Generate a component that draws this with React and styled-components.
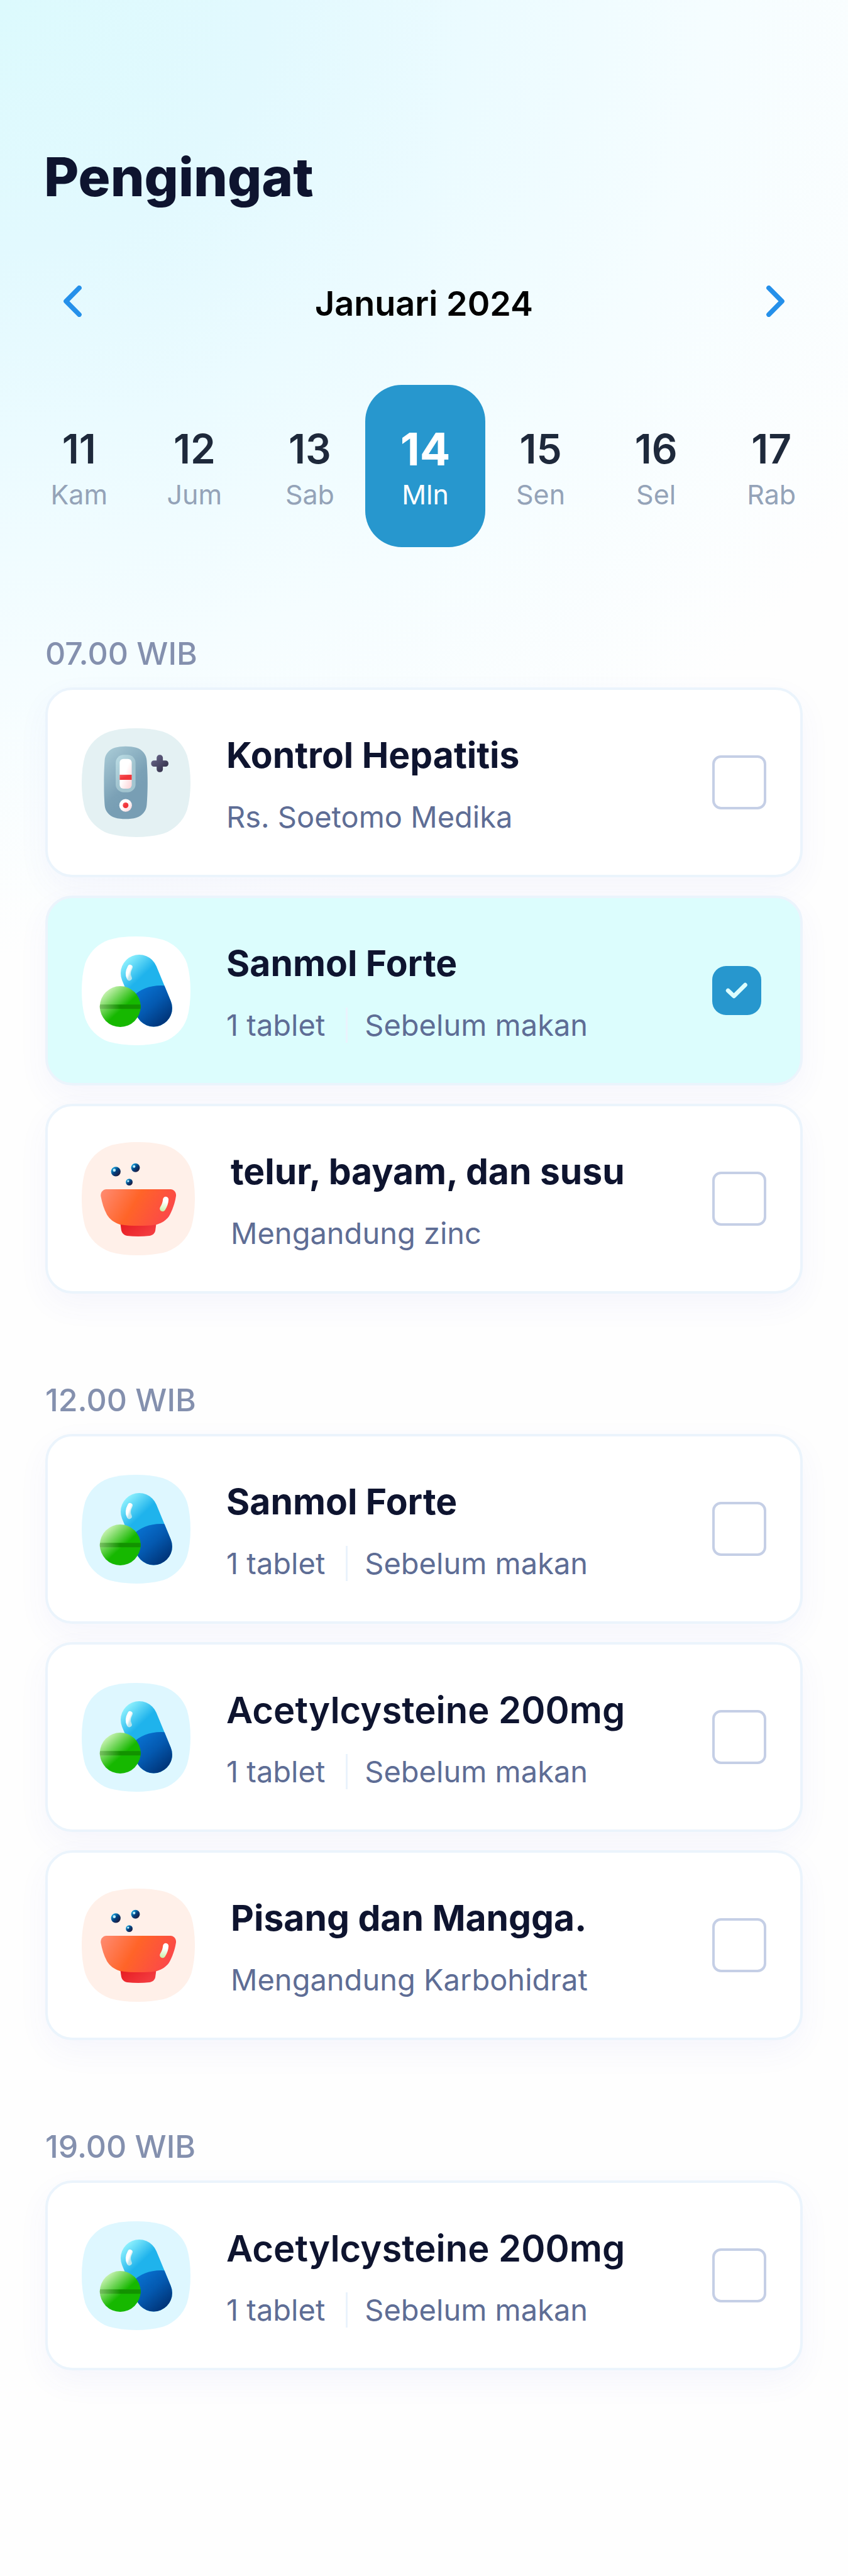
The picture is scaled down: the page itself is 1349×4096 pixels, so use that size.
import React, { useState } from "react";
import styled, { createGlobalStyle } from "styled-components";

const GlobalStyle = createGlobalStyle`
  *, *::before, *::after { box-sizing: border-box; }
  html { background: #fefefe; }
  body { margin: 0; font-family: "Inter", "Liberation Sans", sans-serif; }
  h1, h2, h3, p, ul { margin: 0; padding: 0; }
  ul { list-style: none; }
  button { border: 0; padding: 0; background: none; font: inherit; color: inherit; cursor: pointer; }
`;

const Page = styled.div`
  padding: 230px 0 327px;
  background: radial-gradient(
      ellipse 120% 1520px at 0 0,
      #dcfafd 0%,
      #e2f9fe 26%,
      #ebfbff 46%,
      #f5fdff 70%,
      #fefefe 100%
    ) no-repeat #fefefe;
`;

const PageTitle = styled.h1`
  padding: 0 70px;
  color: #0e142f;
  font-size: 85px;
  line-height: 104px;
  font-weight: 800;
`;

const MonthNav = styled.nav`
  display: flex;
  align-items: flex-start;
  justify-content: space-between;
  margin-top: 117px;
  padding: 0 101px;
`;

const MonthName = styled.h2`
  color: #000;
  font-size: 54px;
  line-height: 64px;
  font-weight: 600;
`;

const ArrowButton = styled.button`
  display: flex;
  align-items: center;
  height: 56px;
`;

const ArrowIcon = styled.svg`
  width: 29px;
  height: 50px;
  fill: none;
  stroke: #2590ea;
  stroke-width: 8.6;
  stroke-linecap: round;
  stroke-linejoin: round;
`;

const Days = styled.ul`
  display: grid;
  grid-template-columns: repeat(7, minmax(0, 1fr));
  justify-items: center;
  margin-top: 97px;
  padding: 0 30px 0 34px;
`;

const Day = styled.li`
  display: flex;
  justify-content: center;
`;

const DayButton = styled.button`
  display: flex;
  flex-direction: column;
  align-items: center;
  gap: 8px;
  flex: none;
  width: 191px;
  height: 258px;
  padding-top: 64px;
  border-radius: 58px;
  background: ${(p) => (p.$active ? "#2797ce" : "transparent")};
`;

const DayNumber = styled.span`
  color: ${(p) => (p.$active ? "#fff" : "#1e293b")};
  font-size: ${(p) => (p.$active ? 72 : 64)}px;
  line-height: 76px;
  font-weight: ${(p) => (p.$active ? 700 : 600)};
`;

const DayName = styled.span`
  color: ${(p) => (p.$active ? "#fff" : "#94a3b8")};
  font-size: 43px;
  line-height: 52px;
  font-weight: 400;
`;

const Schedule = styled.main`
  display: flex;
  flex-direction: column;
  gap: 139px;
  margin-top: 139px;
  padding: 0 72px;
`;

const TimeSlot = styled.section`
  display: flex;
  flex-direction: column;
  gap: 24px;
`;

const TimeLabel = styled.h2`
  color: #8490ae;
  font-size: 50px;
  line-height: 60px;
  font-weight: 500;
`;

const CardList = styled.ul`
  display: flex;
  flex-direction: column;
  gap: 29px;
`;

const Card = styled.li`
  display: flex;
  align-items: center;
  gap: 57px;
  height: 302px;
  padding: 0 54px;
  border: 4px solid #ebf4fc;
  border-radius: 43px;
  background: ${(p) => (p.$done ? "#dcfdfd" : "#fff")};
  box-shadow: 0 18px 50px rgba(80, 85, 210, 0.05);
`;

const Tile = styled.svg`
  flex: none;
  width: ${(p) => p.$size}px;
  height: ${(p) => p.$size}px;
`;

const CardBody = styled.div`
  display: flex;
  flex-direction: column;
  flex: 1;
  gap: 30px;
  min-width: 0;
`;

const CardTitle = styled.h3`
  color: #0e142f;
  font-size: ${(p) => (p.$light ? 58 : 57)}px;
  line-height: 80px;
  font-weight: ${(p) => (p.$light ? 600 : 700)};
  white-space: nowrap;
`;

const Details = styled.div`
  display: flex;
  align-items: center;
  color: #5e6d95;
  font-size: 47px;
  line-height: 56px;
  white-space: nowrap;
`;

const Divider = styled.span`
  width: 3px;
  height: 56px;
  margin: 0 27px 0 33px;
  background: #eaf3fc;
`;

const CheckSlot = styled.span`
  display: grid;
  justify-items: start;
  align-items: center;
  flex: none;
  width: 86px;
`;

const CheckInput = styled.input`
  grid-area: 1 / 1;
  appearance: none;
  width: 86px;
  height: 86px;
  margin: 0;
  border: 4px solid #c5cfe6;
  border-radius: 14px;
  cursor: pointer;

  &:checked {
    width: 78px;
    height: 78px;
    border: 0;
    border-radius: 22px;
    background: #2797ce;
  }
`;

const CheckMark = styled.svg`
  grid-area: 1 / 1;
  width: 78px;
  height: 78px;
  fill: none;
  stroke: #dcfdfd;
  stroke-width: 7.4;
  stroke-linecap: round;
  stroke-linejoin: round;
  pointer-events: none;
`;

const Defs = styled.svg`
  display: block;
  width: 0;
  height: 0;
`;

const squircle =
  "M0 96C0 78 2 62 6 48C13 28 28 13 48 6C62 2 78 0 96 0C114 0 130 2 144 6C164 13 179 28 186 48C190 62 192 78 192 96C192 114 190 130 186 144C179 164 164 179 144 186C130 190 114 192 96 192C78 192 62 190 48 186C28 179 13 164 6 144C2 130 0 114 0 96Z";

function Stops({ colors }) {
  return colors.map(([offset, color]) => (
    <stop key={offset} offset={offset} stopColor={color} />
  ));
}

function SharedGradients() {
  const user = { gradientUnits: "userSpaceOnUse" };
  return (
    <Defs aria-hidden="true">
      <defs>
        <linearGradient id="kitBody" {...user} x1="42" y1="42" x2="100" y2="105">
          <Stops colors={[[0, "#a6c8d4"], [0.8, "#7ba1b6"], [1, "#789eb4"]]} />
        </linearGradient>
        <linearGradient id="kitFrame" x1="0" y1="0" x2="0.7" y2="1">
          <Stops colors={[[0, "#bcdde5"], [0.6, "#a2c5d0"]]} />
        </linearGradient>
        <linearGradient id="kitWindow" x1="0" y1="0" x2="1" y2="1">
          <Stops colors={[[0.45, "#ffffff"], [1, "#fdd0d4"]]} />
        </linearGradient>
        <linearGradient id="kitRed" x1="0" y1="0" x2="1" y2="1">
          <Stops colors={[[0, "#fb5a5e"], [0.5, "#f0353a"]]} />
        </linearGradient>
        <linearGradient id="kitPlus" x1="0" y1="0" x2="1" y2="1">
          <Stops colors={[[0, "#6e6b90"], [1, "#2b2940"]]} />
        </linearGradient>
        <linearGradient id="capTop" {...user} x1="76" y1="42" x2="112" y2="80">
          <Stops colors={[[0, "#90f2fe"], [0.8, "#1fb3ec"]]} />
        </linearGradient>
        <linearGradient id="capBottom" {...user} x1="100" y1="92" x2="150" y2="150">
          <Stops colors={[[0, "#0872d2"], [0.5, "#0459b0"], [1, "#003478"]]} />
        </linearGradient>
        <linearGradient id="capShine" x1="0" y1="0" x2="0.4" y2="1">
          <Stops colors={[[0.5, "#ffffff"], [1, "#b5e4ee"]]} />
        </linearGradient>
        <linearGradient id="tabletGreen" x1="0.1" y1="0.1" x2="0.55" y2="0.6">
          <Stops colors={[[0, "#d8f8c2"], [0.5, "#72d65a"], [0.95, "#16b800"]]} />
        </linearGradient>
        <linearGradient id="tabletBand" x1="0" y1="0" x2="1" y2="0">
          <Stops colors={[[0, "#78be62"], [0.5, "#129200"]]} />
        </linearGradient>
        <clipPath id="capLower">
          <path d="M60 150L90 106Q112 84 150 87H200V200H60Z" />
        </clipPath>
        <linearGradient id="bowl" {...user} x1="40" y1="85" x2="150" y2="150">
          <Stops colors={[[0, "#ff886c"], [0.45, "#ff6428"], [1, "#fb464c"]]} />
        </linearGradient>
        <linearGradient id="bowlBase" x1="0" y1="0" x2="1" y2="0.5">
          <Stops colors={[[0, "#e61a20"], [1, "#f33c40"]]} />
        </linearGradient>
        <linearGradient id="bowlShine" {...user} x1="148" y1="98" x2="144" y2="124">
          <Stops colors={[[0.3, "#ffffff"], [1, "#c4f0a0"]]} />
        </linearGradient>
        <linearGradient id="berry" x1="0.1" y1="0.1" x2="0.9" y2="0.9">
          <Stops colors={[[0, "#12a8e4"], [0.5, "#04407e"], [1, "#241634"]]} />
        </linearGradient>
      </defs>
    </Defs>
  );
}

function TestKitIcon() {
  return (
    <Tile $size={173} viewBox="0 0 192 192" aria-hidden="true">
      <path d={squircle} fill="#e4f1f3" />
      <path
        fill="url(#kitBody)"
        d="M77.5 32C84 32 91 33 96 34.2C107 37.500 114 46 114.800 57C116 75 116.300 85 116.300 96C116.300 107 116 120 114.800 135C114 146 107 154.500 96 157.800C91 159.500 84 160 77.500 160C71 160 64 159.500 59 157.800C48 154.500 41 146 40.500 135C39.300 120 39.300 107 39.300 96C39.300 85 39.300 75 40.500 57C41 46 48 37.500 59 34.200C64 33 71 32 77.500 32Z"
      />
      <rect x="60" y="47" width="35" height="66" rx="14" fill="url(#kitFrame)" />
      <rect x="67" y="54" width="21.300" height="52.500" rx="6.500" fill="url(#kitWindow)" />
      <rect x="67" y="82" width="21.300" height="9" fill="url(#kitRed)" />
      <circle cx="77.500" cy="136" r="11.200" fill="url(#kitWindow)" />
      <circle cx="77.500" cy="136" r="5" fill="url(#kitRed)" />
      <path
        fill="url(#kitPlus)"
        d="M132.300 52a5 5 0 0 1 5-5h1a5 5 0 0 1 5 5v4.800h4.800a5 5 0 0 1 5 5v1a5 5 0 0 1-5 5h-4.800v4.700a5 5 0 0 1-5 5h-1a5 5 0 0 1-5-5v-4.700h-4.800a5 5 0 0 1-5-5v-1a5 5 0 0 1 5-5h4.800z"
      />
    </Tile>
  );
}

function PillsIcon({ background }) {
  return (
    <Tile $size={173} viewBox="0 0 192 192" aria-hidden="true">
      <path d={squircle} fill={background} />
      <g fill="none" strokeLinecap="round">
        <path d="M101.500 65L127 126.500" stroke="url(#capTop)" strokeWidth="65.500" />
        <g clipPath="url(#capLower)">
          <path d="M101.500 65L127 126.500" stroke="url(#capBottom)" strokeWidth="65.500" />
        </g>
        <path d="M85.300 54.500Q79.500 65 84 73.500" stroke="url(#capShine)" strokeWidth="9" />
      </g>
      <circle cx="68" cy="123.700" r="36" fill="url(#tabletGreen)" />
      <path d="M32.200 120H103.800Q104.400 124 103.800 128H32.200Q31.600 124 32.200 120Z" fill="url(#tabletBand)" />
    </Tile>
  );
}

function BowlIcon() {
  const berries = [
    [60.3, 52, 8.5],
    [95, 45.3, 7.7],
    [84, 70.7, 6],
  ];
  return (
    <Tile $size={180} viewBox="0 0 200 200" aria-hidden="true">
      <path d={squircle} transform="scale(1.0417)" fill="#fff0e9" />
      <path
        fill="url(#bowlBase)"
        d="M68 142L69.800 155C71 161 75 164.800 80 165.500Q100 168 120 165.500C126 164.500 129.500 161 130.300 155L132 142Z"
      />
      <path
        fill="url(#bowl)"
        d="M43.500 83.300H157C163 83.300 167.500 89 166.600 95.500C164.500 109 160 120 155.500 129C151 137 143 142.500 133 145.500C122 147.800 111 147.800 100 147.800C89 147.800 78 147.500 67.500 145.500C57 142 49 136 44.500 128C39 118 36 107 33.700 95.500C33 89 37.500 83.300 43.500 83.300Z"
      />
      <path d="M148.500 101.500Q148 110 143 117.500" fill="none" stroke="url(#bowlShine)" strokeWidth="10" strokeLinecap="round" />
      {berries.map(([x, y, r]) => (
        <g key={x}>
          <circle cx={x} cy={y} r={r} fill="url(#berry)" />
          <circle cx={x - r * 0.32} cy={y - r * 0.28} r={r * 0.3} fill="#bfeefb" />
        </g>
      ))}
    </Tile>
  );
}

const days = [
  [11, "Kam"],
  [12, "Jum"],
  [13, "Sab"],
  [14, "Mln"],
  [15, "Sen"],
  [16, "Sel"],
  [17, "Rab"],
];

const slots = [
  {
    time: "07.00 WIB",
    items: [
      { id: "hepatitis", kind: "kit", title: "Kontrol Hepatitis", details: ["Rs. Soetomo Medika"] },
      { id: "sanmol-pagi", kind: "pills", title: "Sanmol Forte", details: ["1 tablet", "Sebelum makan"] },
      { id: "sarapan", kind: "bowl", title: "telur, bayam, dan susu", details: ["Mengandung zinc"] },
    ],
  },
  {
    time: "12.00 WIB",
    items: [
      { id: "sanmol-siang", kind: "pills", title: "Sanmol Forte", details: ["1 tablet", "Sebelum makan"] },
      { id: "acetyl-siang", kind: "pills", title: "Acetylcysteine 200mg", light: true, details: ["1 tablet", "Sebelum makan"] },
      { id: "buah", kind: "bowl", title: "Pisang dan Mangga.", details: ["Mengandung Karbohidrat"] },
    ],
  },
  {
    time: "19.00 WIB",
    items: [
      { id: "acetyl-malam", kind: "pills", title: "Acetylcysteine 200mg", light: true, details: ["1 tablet", "Sebelum makan"] },
    ],
  },
];

function Reminder({ item, done, onToggle }) {
  return (
    <Card $done={done}>
      {item.kind === "kit" && <TestKitIcon />}
      {item.kind === "pills" && <PillsIcon background={done ? "#fff" : "#def7ff"} />}
      {item.kind === "bowl" && <BowlIcon />}
      <CardBody>
        <CardTitle $light={item.light}>
          <label htmlFor={item.id}>{item.title}</label>
        </CardTitle>
        <Details>
          {item.details.map((text, i) => (
            <React.Fragment key={text}>
              {i > 0 && <Divider />}
              <span>{text}</span>
            </React.Fragment>
          ))}
        </Details>
      </CardBody>
      <CheckSlot>
        <CheckInput id={item.id} type="checkbox" checked={done} onChange={onToggle} />
        {done && (
          <CheckMark viewBox="0 0 87 87" aria-hidden="true">
            <path d="M28 43.500L38.500 53.500L58.500 33.500" />
          </CheckMark>
        )}
      </CheckSlot>
    </Card>
  );
}

export default function App() {
  const [activeDay, setActiveDay] = useState(14);
  const [done, setDone] = useState({ "sanmol-pagi": true });
  const toggle = (id) => setDone((d) => ({ ...d, [id]: !d[id] }));

  return (
    <>
      <GlobalStyle />
      <SharedGradients />
      <Page>
        <PageTitle>Pengingat</PageTitle>
        <MonthNav>
          <ArrowButton type="button" aria-label="Bulan sebelumnya">
            <ArrowIcon viewBox="0 0 32 56">
              <path d="M27.700 4.300L4.300 28L27.700 51.700" />
            </ArrowIcon>
          </ArrowButton>
          <MonthName>Januari 2024</MonthName>
          <ArrowButton type="button" aria-label="Bulan berikutnya">
            <ArrowIcon viewBox="0 0 32 56">
              <path d="M4.300 4.300L27.700 28L4.300 51.700" />
            </ArrowIcon>
          </ArrowButton>
        </MonthNav>
        <Days>
          {days.map(([number, name]) => {
            const active = number === activeDay;
            return (
              <Day key={number}>
                <DayButton type="button" $active={active} aria-pressed={active} onClick={() => setActiveDay(number)}>
                  <DayNumber $active={active}>{number}</DayNumber>
                  <DayName $active={active}>{name}</DayName>
                </DayButton>
              </Day>
            );
          })}
        </Days>
        <Schedule>
          {slots.map((slot) => (
            <TimeSlot key={slot.time}>
              <TimeLabel>{slot.time}</TimeLabel>
              <CardList>
                {slot.items.map((item) => (
                  <Reminder key={item.id} item={item} done={!!done[item.id]} onToggle={() => toggle(item.id)} />
                ))}
              </CardList>
            </TimeSlot>
          ))}
        </Schedule>
      </Page>
    </>
  );
}
